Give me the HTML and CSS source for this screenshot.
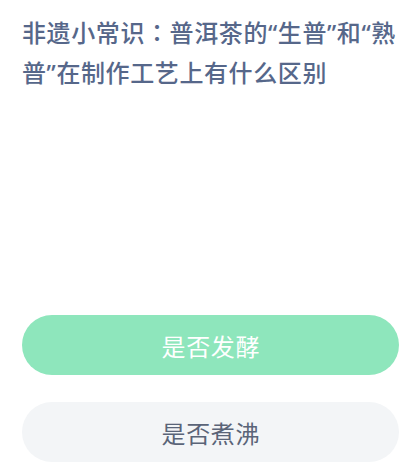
FILE: index.html
```html
<!DOCTYPE html>
<html lang="zh-CN">
<head>
    <meta charset="UTF-8">
    <meta name="viewport" content="width=device-width, initial-scale=1.0">
    <title>非遗小常识</title>
    <link rel="stylesheet" href="styles.css">
</head>
<body>
    <div class="quiz">
        <h1 class="question">非遗小常识<span class="colon">：</span>普洱茶的“生普”和“熟普”在制作工艺上有什么区别</h1>
        <div class="spacer"></div>
        <div class="answers">
            <button class="answer answer-right">是否发酵</button>
            <button class="answer">是否煮沸</button>
        </div>
    </div>
</body>
</html>
```

FILE: styles.css
```css
body {
    font-family: "Noto Sans", "Noto Sans CJK SC", sans-serif;
    background-color: #ffffff;
    margin: 0;
    padding: 0;
}
.quiz {
    padding: 12px 4px 0 22px;
    height: 467px;
    box-sizing: border-box;
    display: flex;
    flex-direction: column;
}
.question {
    margin: 0;
    font-size: 24px;
    font-weight: 500;
    line-height: 40px;
    letter-spacing: 0.6px;
    color: #56678a;
}
.colon {
    display: inline-block;
    font-family: "Noto Sans CJK TC", sans-serif;
}
.spacer {
    height: 222px;
}
.answers {
    display: flex;
    flex-direction: column;
    gap: 27px;
}
.answer {
    width: 377px;
    height: 60px;
    border: none;
    border-radius: 30px;
    background-color: #f3f5f7;
    color: #5a6478;
    font-family: inherit;
    font-size: 24px;
    letter-spacing: 0.6px;
    padding: 0 0 0 0.6px;
    cursor: pointer;
}
.answer-right {
    background-color: #8ee6bc;
    color: #ffffff;
}
```
